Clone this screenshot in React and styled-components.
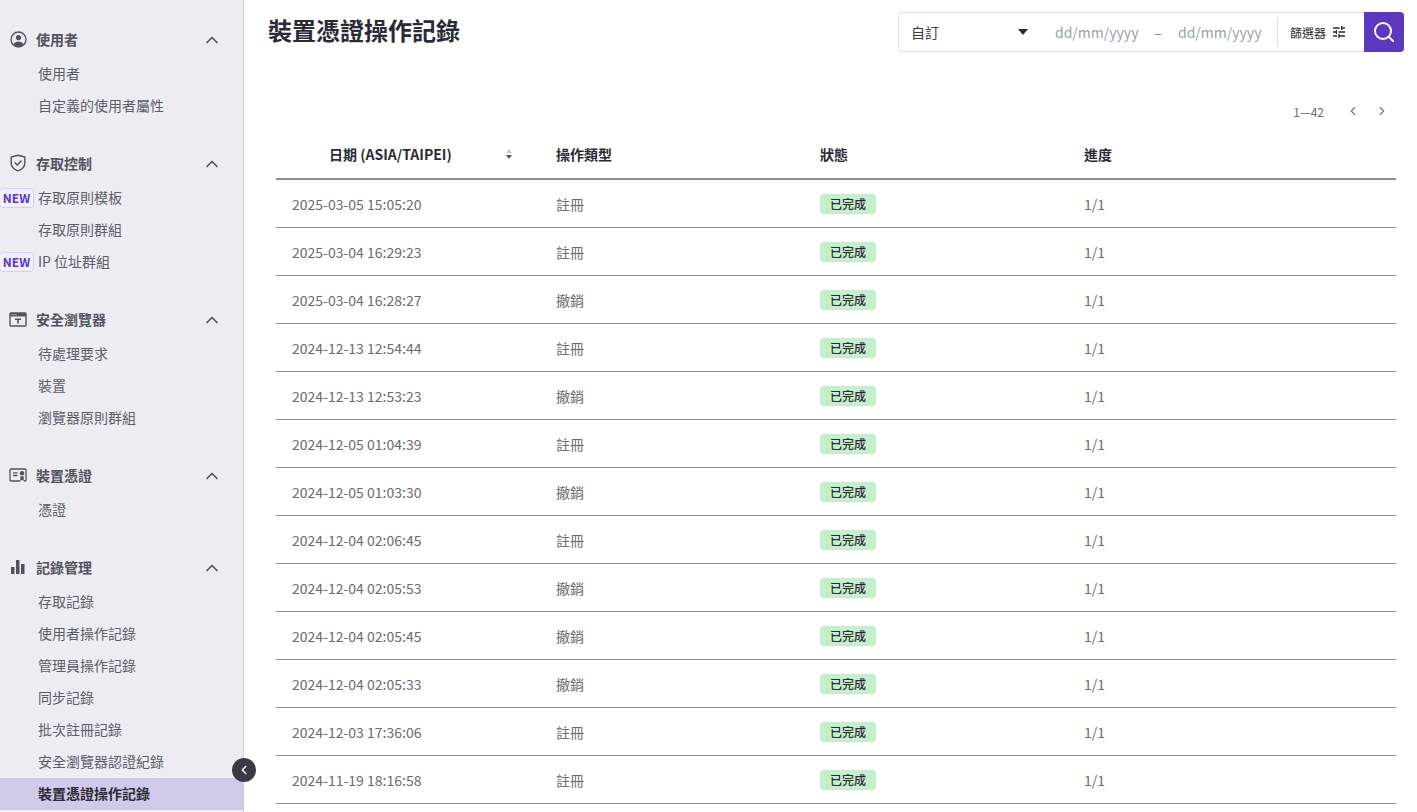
import styled, {createGlobalStyle} from "styled-components";
import {ChevronUp, ChevronLeft, ChevronRight, Search} from "lucide-react";
import {MdTune} from "react-icons/md";

const GlobalStyle = createGlobalStyle`
  html, body {
    margin: 0;
    height: 100%;
    overflow: hidden;
    background: #fff;
    font-family: "Noto Sans CJK TC", "Noto Sans", sans-serif;
  }
`;

const Page = styled.div`
  display: flex;
  width: 1417px;
  height: 812px;
  overflow: hidden;
  position: relative;
`;

const Sidebar = styled.nav`
  flex: 0 0 244px;
  box-sizing: border-box;
  height: 812px;
  padding-top: 24px;
  background: #ecedf3;
  border-right: 1px solid #c9cad3;
  overflow: hidden;
`;

const Section = styled.div`
  margin-bottom: 26px;
`;

const SectionHeader = styled.div`
  display: flex;
  align-items: center;
  box-sizing: border-box;
  height: 32px;
  margin-bottom: 2px;
  padding: 0 21px 2px 9px;
  color: #52525e;
  font-size: 14px;
  font-weight: 700;
`;

const SectionIcon = styled.span`
  display: flex;
  align-items: center;
  justify-content: center;
  width: 18px;
  height: 18px;
  margin-right: 9px;
`;

const SectionTitle = styled.span`
  flex: 1;
`;

const Chevron = styled(ChevronUp)`
  margin-top: 1px;
`;

const Item = styled.a`
  display: block;
  position: relative;
  height: 32px;
  line-height: 30px;
  padding-left: 38px;
  font-size: 14px;
  color: ${(p) => (p.$active ? "#2b2b36" : "#5d5d69")};
  font-weight: ${(p) => (p.$active ? 700 : 400)};
  background: ${(p) => (p.$active ? "#d0caea" : "transparent")};
`;

const NewBadge = styled.span`
  position: absolute;
  left: -1px;
  top: 6px;
  box-sizing: border-box;
  width: 35px;
  height: 20px;
  line-height: 17px;
  text-align: center;
  border: 1px solid #d5d0f3;
  border-radius: 4px;
  background: #f1effc;
  color: #5a36c2;
  font-size: 12px;
  font-weight: 700;
`;

const CollapseButton = styled.button`
  position: absolute;
  left: 232px;
  top: 758px;
  display: flex;
  align-items: center;
  justify-content: center;
  width: 24px;
  height: 24px;
  padding: 0;
  border: none;
  border-radius: 50%;
  background: #3a3a44;
  color: #fff;
`;

const Main = styled.main`
  flex: 1;
  min-width: 0;
  padding-right: 13px;
`;

const TopBar = styled.div`
  display: flex;
  align-items: flex-start;
  justify-content: space-between;
  padding: 12px 0 0 24px;
`;

const Title = styled.h1`
  margin: 0;
  height: 36px;
  line-height: 36px;
  font-size: 24px;
  font-weight: 700;
  color: #2b2b36;
`;

const FilterBar = styled.div`
  display: flex;
  align-items: center;
  box-sizing: border-box;
  width: 506px;
  height: 40px;
  border: 1px solid #e0e0e4;
  border-radius: 4px;
  position: relative;
`;

const RangeSelect = styled.div`
  display: flex;
  align-items: center;
  justify-content: space-between;
  box-sizing: border-box;
  width: 143px;
  padding: 0 14px 0 12px;
  margin-right: 13px;
  font-size: 14px;
  color: #3a3a44;
`;

const Caret = styled.span`
  width: 0;
  height: 0;
  border-left: 5px solid transparent;
  border-right: 5px solid transparent;
  border-top: 6px solid #2b2b36;
`;

const DateText = styled.span`
  width: 83px;
  white-space: nowrap;
  font-size: 14px;
  color: #9aa0ad;
`;

const DateDash = styled.span`
  width: 40px;
  text-align: center;
  font-size: 14px;
  color: #7d8390;
`;

const FilterButton = styled.div`
  display: flex;
  align-items: center;
  gap: 5px;
  height: 28px;
  margin-left: 16px;
  padding-left: 12px;
  border-left: 1px solid #e0e0e4;
  font-size: 12px;
  color: #2b2b36;
`;

const SearchButton = styled.button`
  position: absolute;
  right: -1px;
  top: -1px;
  display: flex;
  align-items: center;
  justify-content: center;
  width: 40px;
  height: 40px;
  padding: 0;
  border: none;
  border-radius: 0 4px 4px 0;
  background: #5c38bd;
  color: #fff;
`;

const Pager = styled.div`
  display: flex;
  align-items: center;
  justify-content: flex-end;
  height: 24px;
  margin-top: 47px;
  padding-right: 15px;
  font-size: 12px;
  color: #6a6a75;
`;

const PagerLabel = styled.span`
  margin-right: 22px;
`;

const PagerArrow = styled.span`
  display: flex;
  justify-content: center;
  width: 14px;
  margin-right: 15px;
  color: #777782;

  &:last-child {
    margin-right: 0;
  }
`;

const Table = styled.table`
  width: 1120px;
  margin: 7px 0 0 32px;
  border-collapse: collapse;
  table-layout: fixed;
`;

const HeadCell = styled.th`
  width: ${(p) => p.$width || "auto"};
  box-sizing: border-box;
  height: 49px;
  padding: 0 16px;
  text-align: left;
  font-size: 14px;
  font-weight: 700;
  color: #2b2b36;
  border-bottom: 2px solid #8d8d94;
`;

const DateHead = styled.div`
  display: flex;
  align-items: center;
  padding-left: 37px;
  justify-content: space-between;
`;

const SortIcon = styled.svg`
  display: block;
  margin-right: 11px;
`;

const Row = styled.tr`
  height: 48px;
  border-bottom: 1px solid #8d8d94;
`;

const Cell = styled.td`
  box-sizing: border-box;
  padding: 1px 16px 0;
  font-size: 14px;
  color: #6a6a75;
`;

const StatusTag = styled.span`
  display: inline-block;
  width: 56px;
  height: 20px;
  margin-top: -2px;
  line-height: 20px;
  text-align: center;
  vertical-align: middle;
  border-radius: 4px;
  background: #c5efcb;
  color: #2b2b36;
  font-size: 12px;
  font-weight: 500;
`;

const UserIcon = () => (
  <svg width="17" height="17" viewBox="0 0 17 17" fill="none">
    <circle cx="8.5" cy="8.5" r="7.5" stroke="#52525e" strokeWidth="1.4"/>
    <circle cx="8.5" cy="6.6" r="2.6" fill="#52525e"/>
    <path d="M3.4 13.2c1-1.9 3-2.7 5.1-2.7s4.100.8 5.100 2.700A7.500 7.500 0 0 1 8.500 16a7.500 7.500 0 0 1-5.100-2.800z" fill="#52525e"/>
  </svg>
);

const ShieldIcon = () => (
  <svg width="16" height="18" viewBox="0 0 16 18" fill="none" stroke="#52525e" strokeWidth="1.4" strokeLinejoin="round" strokeLinecap="round">
    <path d="M8 1.200 14.800 3v6.200c0 3.600-3 6.200-6.800 7.600-3.800-1.400-6.800-4-6.800-7.600V3z"/>
    <path d="M5 8.700l2.200 2.200 3.900-4"/>
  </svg>
);

const BrowserIcon = () => (
  <svg width="18" height="15" viewBox="0 0 18 15" fill="none">
    <rect x="1" y="1" width="16" height="13" rx="1" stroke="#52525e" strokeWidth="1.4"/>
    <rect x="1" y="1" width="16" height="3.500" fill="#52525e"/>
    <path d="M2.500 2.300h1v1h-1zM4.500 2.300h1v1h-1zM6.500 2.300h1v1h-1z" fill="#ecedf3"/>
    <path d="M6 6.500h6v1.500H9.800v3.500H8.200V8H6z" fill="#52525e"/>
  </svg>
);

const CredentialIcon = () => (
  <svg width="18" height="14" viewBox="0 0 18 14" fill="none">
    <path d="M11 13H2a1 1 0 0 1-1-1V2a1 1 0 0 1 1-1h14a1 1 0 0 1 1 1v10a1 1 0 0 1-1 1h-1" stroke="#52525e" strokeWidth="1.300"/>
    <path d="M4 4.800h4.500M4 7.500h4.500" stroke="#52525e" strokeWidth="1.300"/>
    <circle cx="13" cy="5.300" r="2.200" fill="#52525e"/>
    <path d="M11.300 8.300h3.400V13l-1.700-1-1.700 1z" fill="#52525e"/>
  </svg>
);

const ChartIcon = () => (
  <svg width="14" height="14" viewBox="0 0 14 14" fill="#52525e">
    <rect x="0" y="7" width="3.500" height="7"/>
    <rect x="5" y="0" width="3.500" height="14"/>
    <rect x="10" y="4" width="3.500" height="10"/>
  </svg>
);

const SortArrows = () => (
  <SortIcon width="8" height="12" viewBox="0 0 8 12">
    <path d="M4 1l3 4H1z" fill="#c6c6cc"/>
    <path d="M4 11l3-4H1z" fill="#55555f"/>
  </SortIcon>
);

const menu = [
  {title: "使用者", icon: <UserIcon/>, items: [{label: "使用者"}, {label: "自定義的使用者屬性"}]},
  {
    title: "存取控制",
    icon: <ShieldIcon/>,
    items: [{label: "存取原則模板", isNew: true}, {label: "存取原則群組"}, {label: "IP 位址群組", isNew: true}],
  },
  {title: "安全瀏覽器", icon: <BrowserIcon/>, items: [{label: "待處理要求"}, {label: "裝置"}, {label: "瀏覽器原則群組"}]},
  {title: "裝置憑證", icon: <CredentialIcon/>, items: [{label: "憑證"}]},
  {
    title: "記錄管理",
    icon: <ChartIcon/>,
    items: [
      {label: "存取記錄"},
      {label: "使用者操作記錄"},
      {label: "管理員操作記錄"},
      {label: "同步記錄"},
      {label: "批次註冊記錄"},
      {label: "安全瀏覽器認證紀錄"},
      {label: "裝置憑證操作記錄", active: true},
    ],
  },
];

const rows = [
  ["2025-03-05 15:05:20", "註冊"],
  ["2025-03-04 16:29:23", "註冊"],
  ["2025-03-04 16:28:27", "撤銷"],
  ["2024-12-13 12:54:44", "註冊"],
  ["2024-12-13 12:53:23", "撤銷"],
  ["2024-12-05 01:04:39", "註冊"],
  ["2024-12-05 01:03:30", "撤銷"],
  ["2024-12-04 02:06:45", "註冊"],
  ["2024-12-04 02:05:53", "撤銷"],
  ["2024-12-04 02:05:45", "撤銷"],
  ["2024-12-04 02:05:33", "撤銷"],
  ["2024-12-03 17:36:06", "註冊"],
  ["2024-11-19 18:16:58", "註冊"],
];

const App = () => {
  return (
    <Page>
      <GlobalStyle/>
      <Sidebar>
        {menu.map((section) => (
          <Section key={section.title}>
            <SectionHeader>
              <SectionIcon>{section.icon}</SectionIcon>
              <SectionTitle>{section.title}</SectionTitle>
              <Chevron size={20} color="#52525e" strokeWidth={2}/>
            </SectionHeader>
            {section.items.map((item) => (
              <Item key={item.label} $active={item.active}>
                {item.isNew && <NewBadge>NEW</NewBadge>}
                {item.label}
              </Item>
            ))}
          </Section>
        ))}
      </Sidebar>
      <CollapseButton>
        <ChevronLeft size={14} strokeWidth={2.5}/>
      </CollapseButton>
      <Main>
        <TopBar>
          <Title>裝置憑證操作記錄</Title>
          <FilterBar>
            <RangeSelect>
              自訂
              <Caret/>
            </RangeSelect>
            <DateText>dd/mm/yyyy</DateText>
            <DateDash>–</DateDash>
            <DateText>dd/mm/yyyy</DateText>
            <FilterButton>
              篩選器
              <MdTune size={16}/>
            </FilterButton>
            <SearchButton>
              <Search size={24} strokeWidth={2}/>
            </SearchButton>
          </FilterBar>
        </TopBar>
        <Pager>
          <PagerLabel>1—42</PagerLabel>
          <PagerArrow><ChevronLeft size={14}/></PagerArrow>
          <PagerArrow><ChevronRight size={14}/></PagerArrow>
        </Pager>
        <Table>
          <thead>
            <tr>
              <HeadCell $width="264px">
                <DateHead>
                  日期 (ASIA/TAIPEI)
                  <SortArrows/>
                </DateHead>
              </HeadCell>
              <HeadCell $width="264px">操作類型</HeadCell>
              <HeadCell $width="264px">狀態</HeadCell>
              <HeadCell>進度</HeadCell>
            </tr>
          </thead>
          <tbody>
            {rows.map(([date, type]) => (
              <Row key={date}>
                <Cell>{date}</Cell>
                <Cell>{type}</Cell>
                <Cell><StatusTag>已完成</StatusTag></Cell>
                <Cell>1/1</Cell>
              </Row>
            ))}
          </tbody>
        </Table>
      </Main>
    </Page>
  );
};

export default App;
